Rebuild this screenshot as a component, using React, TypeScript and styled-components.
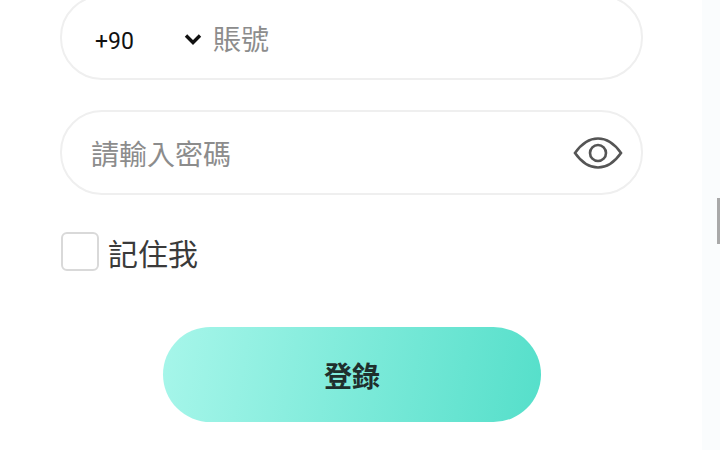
import React from 'react'
import styled, { createGlobalStyle } from 'styled-components'

const GlobalStyle = createGlobalStyle`
    html, body {
        margin: 0;
        height: 100%;
        overflow: hidden;
        background: #ffffff;
    }
    body {
        font-family: "Liberation Sans", "Noto Sans CJK TC", sans-serif;
    }
`

const Page = styled.div`
    position: relative;
    width: 720px;
    height: 450px;
    overflow: hidden;
    display: flex;
    background: #ffffff;
`
const Form = styled.form`
    width: 702px;
    box-sizing: border-box;
    margin-top: -5px;
    padding: 0 59px 0 60px;
    display: flex;
    flex-direction: column;
`
const Side = styled.div`
    width: 18px;
    background: #fafcfd;
`
const ScrollThumb = styled.div`
    position: absolute;
    left: 717px;
    top: 198px;
    width: 3px;
    height: 46px;
    background: #a9a9a9;
`
const Field = styled.div`
    height: 85px;
    box-sizing: border-box;
    border: 2px solid #efefef;
    border-radius: 42px;
    display: flex;
    align-items: center;
    margin-bottom: 30px;
`
const Code = styled.div`
    width: 151px;
    box-sizing: border-box;
    padding: 7px 11px 0 33px;
    display: flex;
    align-items: center;
    justify-content: space-between;
    font-family: Roboto, sans-serif;
    font-size: 23px;
    color: #111111;
`
const Chevron = styled.svg`
    margin-top: -5px;
`
const Placeholder = styled.span<{ $left: number }>`
    flex: 1;
    padding-left: ${p => p.$left}px;
    padding-top: 6px;
    font-size: 28px;
    line-height: 1;
    color: #8c8c8c;
`
const EyeButton = styled.div`
    width: 50px;
    height: 38px;
    margin-right: 18px;
    display: flex;
    align-items: center;
    justify-content: center;
`
const RememberRow = styled.label`
    display: flex;
    align-items: center;
    gap: 9px;
    margin-top: 7px;
    padding-left: 1px;
`
const Box = styled.span`
    width: 38px;
    height: 39px;
    box-sizing: border-box;
    border: 2px solid #d9d9d9;
    border-radius: 6px;
    background: #ffffff;
`
const RememberText = styled.span`
    font-size: 30px;
    line-height: 1;
    color: #3a3a3a;
    margin-top: 6px;
`
const SubmitButton = styled.button`
    align-self: flex-start;
    margin: 56px 0 0 103px;
    width: 378px;
    height: 95px;
    border: none;
    border-radius: 48px;
    background: linear-gradient(100deg, #a7f6ea 0%, #55dfca 100%);
    font-family: inherit;
    font-size: 28px;
    font-weight: 700;
    color: #1f2f2d;
`

const App = () => {
    return (
        <>
            <GlobalStyle />
            <Page>
                <Form>
                    <Field>
                        <Code>
                            +90
                            <Chevron width="18" height="12" viewBox="0 0 18 12" fill="none">
                                <path d="M2 2.5l7 7 7-7" stroke="#111" strokeWidth="3.4" />
                            </Chevron>
                        </Code>
                        <Placeholder $left={0}>賬號</Placeholder>
                    </Field>
                    <Field>
                        <Placeholder $left={29}>請輸入密碼</Placeholder>
                        <EyeButton>
                            <svg width="50" height="34" viewBox="0 0 50 34" fill="none" stroke="#555" strokeWidth="2.6">
                                <path d="M2 17C9 7 16 2.5 25 2.5S41 7 48 17C41 27 34 31.5 25 31.5S9 27 2 17Z" />
                                <circle cx="25" cy="17" r="8" />
                            </svg>
                        </EyeButton>
                    </Field>
                    <RememberRow>
                        <Box />
                        <RememberText>記住我</RememberText>
                    </RememberRow>
                    <SubmitButton type="button">登錄</SubmitButton>
                </Form>
                <Side />
                <ScrollThumb />
            </Page>
        </>
    )
}

export default App
